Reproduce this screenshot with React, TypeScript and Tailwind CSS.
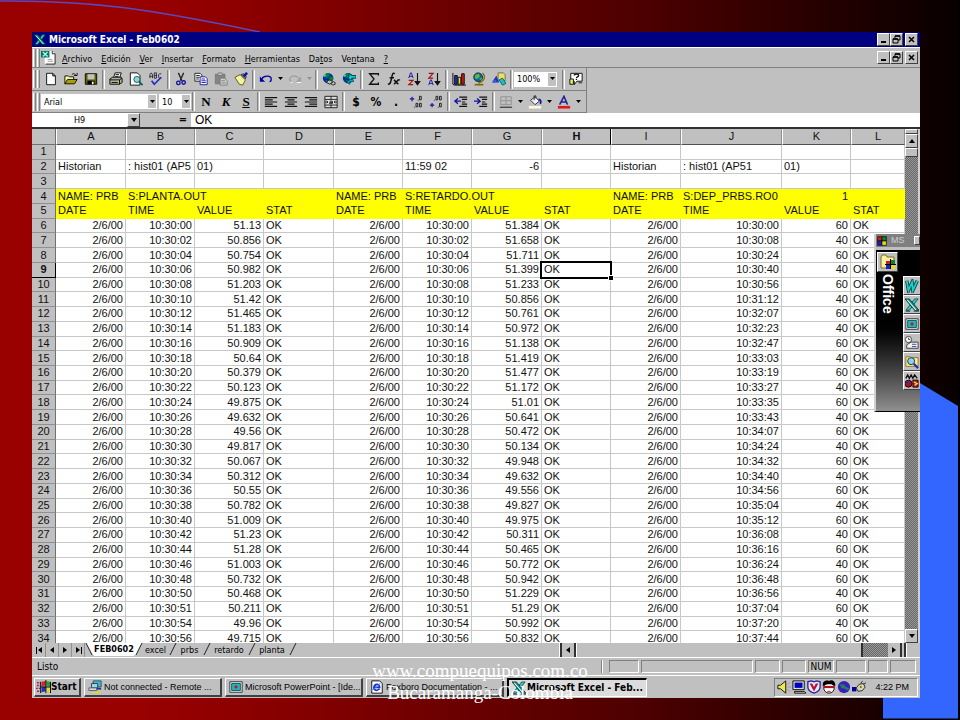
import type { ReactNode } from "react";
import clsx from "clsx";

/* ── Data ──────────────────────────────────────────────────────────────── */

const COLUMNS = [
  { id: "A", width: "w-[70px]" },
  { id: "B", width: "w-[69px]" },
  { id: "C", width: "w-[69px]" },
  { id: "D", width: "w-[70px]" },
  { id: "E", width: "w-[69px]" },
  { id: "F", width: "w-[69px]" },
  { id: "G", width: "w-[70px]" },
  { id: "H", width: "w-[69px]" },
  { id: "I", width: "w-[70px]" },
  { id: "J", width: "w-[101px]" },
  { id: "K", width: "w-[69px]" },
  { id: "L", width: "w-auto" },
];

// [seconds after 10:30, planta, retardo, time of dep_prbs]
const READINGS: [string, string, string, string][] = [
  ["00", "51.13", "51.384", "10:30:00"],
  ["02", "50.856", "51.658", "10:30:08"],
  ["04", "50.754", "51.711", "10:30:24"],
  ["06", "50.982", "51.399", "10:30:40"],
  ["08", "51.203", "51.233", "10:30:56"],
  ["10", "51.42", "50.856", "10:31:12"],
  ["12", "51.465", "50.761", "10:32:07"],
  ["14", "51.183", "50.972", "10:32:23"],
  ["16", "50.909", "51.138", "10:32:47"],
  ["18", "50.64", "51.419", "10:33:03"],
  ["20", "50.379", "51.477", "10:33:19"],
  ["22", "50.123", "51.172", "10:33:27"],
  ["24", "49.875", "51.01", "10:33:35"],
  ["26", "49.632", "50.641", "10:33:43"],
  ["28", "49.56", "50.472", "10:34:07"],
  ["30", "49.817", "50.134", "10:34:24"],
  ["32", "50.067", "49.948", "10:34:32"],
  ["34", "50.312", "49.632", "10:34:40"],
  ["36", "50.55", "49.556", "10:34:56"],
  ["38", "50.782", "49.827", "10:35:04"],
  ["40", "51.009", "49.975", "10:35:12"],
  ["42", "51.23", "50.311", "10:36:08"],
  ["44", "51.28", "50.465", "10:36:16"],
  ["46", "51.003", "50.772", "10:36:24"],
  ["48", "50.732", "50.942", "10:36:48"],
  ["50", "50.468", "51.229", "10:36:56"],
  ["51", "50.211", "51.29", "10:37:04"],
  ["54", "49.96", "50.992", "10:37:20"],
  ["56", "49.715", "50.832", "10:37:44"],
];

const ROWS: string[][] = [
  ["", "", "", "", "", "", "", "", "", "", "", ""],
  ["Historian", ": hist01 (AP5", "01)", "", "", "11:59 02", "-6", "", "Historian", ": hist01 (AP51", "01)", ""],
  ["", "", "", "", "", "", "", "", "", "", "", ""],
  ["NAME: PRB", "S:PLANTA.OUT", "", "", "NAME: PRB", "S:RETARDO.OUT", "", "", "NAME: PRB", "S:DEP_PRBS.RO0", "1", ""],
  ["DATE", "TIME", "VALUE", "STAT", "DATE", "TIME", "VALUE", "STAT", "DATE", "TIME", "VALUE", "STAT"],
  ...READINGS.map(([s, planta, retardo, time], i) => [
    "2/6/00", `10:30:${s}`, planta, "OK",
    "2/6/00", `10:30:${s}`, retardo, "OK",
    "2/6/00", time, i % 2 ? "40" : "60", "OK",
  ]),
];

const MENUS: [string, string, string][] = [
  ["", "A", "rchivo"],
  ["", "E", "dición"],
  ["", "V", "er"],
  ["", "I", "nsertar"],
  ["", "F", "ormato"],
  ["", "H", "erramientas"],
  ["Da", "t", "os"],
  ["Ve", "n", "tana"],
  ["", "?", ""],
];

const UI_FONT = "font-['DejaVu_Sans_Condensed','Liberation_Sans',sans-serif]";
const RAISED = "border border-t-white border-l-white border-r-[#404040] border-b-[#404040] bg-[#c0c0c0]";
const SUNKEN = "border border-t-[#808080] border-l-[#808080] border-r-white border-b-white";
const DITHER = "bg-[repeating-conic-gradient(#686868_0_25%,#989898_0_50%)] bg-[length:2px_2px]";

/* ── Icons (16-unit grid) ──────────────────────────────────────────────── */

function Icon({ size = 14, children }: { size?: number; children: ReactNode }) {
  return (
    <svg width={size} height={size} viewBox="0 0 16 16" fill="none" aria-hidden="true" className="shrink-0">
      {children}
    </svg>
  );
}

const globe = (
  <>
    <circle cx="7" cy="7" r="6" fill="#0030a0" />
    <path d="M3 3l4-2 2 2-2 3-3 1zM9 5l4 1-1 4-3 1-1-3zM4 9l3 1-1 2z" fill="#008830" />
    <path d="M2 5l2-2" stroke="#50d0e0" strokeWidth="2" />
  </>
);

const icons = {
  excel: (
    <>
      <path d="M11 1h4L5 14H1z" fill="#30c8c0" stroke="#034" strokeWidth=".8" />
      <path d="M0 1h5l11 13h-5z" fill="#128878" stroke="#022" strokeWidth=".8" />
      <path d="M2.500 2l10 11.500" stroke="#c8fff8" strokeWidth="1.300" />
      <path d="M1 15h5M10 15h6" stroke="#022" />
    </>
  ),
  excelDoc: (
    <>
      <path d="M4 1h8l3 3v11H4z" fill="#fff" />
      <path d="M15 4v11H5M12 1v3h3" stroke="#222" />
      <path d="M7 10h5M7 12h6" stroke="#999" />
      <path d="M0 1h9v7H0z" fill="#087860" />
      <path d="M2 2l5 5M7 2L2 7" stroke="#a0fff0" strokeWidth="1.500" />
    </>
  ),
  blank: <path d="M3 1.500h7l3 3v10H3zM10 1.500v3h3" fill="#fff" stroke="#000" />,
  open: (
    <>
      <path d="M1 13.500v-9h4l1 1h5v3" fill="#ffffa0" stroke="#000" />
      <path d="M1 13.500l3-5h11l-3 5z" fill="#a8a000" stroke="#000" />
      <path d="M9 3c2-2 4-1 4 1M11.500 4H15V1" stroke="#000" />
    </>
  ),
  save: (
    <>
      <path d="M1.500 2h13v12h-13z" fill="#606000" stroke="#000" />
      <path d="M4 2.500h8v6H4z" fill="#c0c0c0" />
      <path d="M4 10h8v4H4z" fill="#000" />
      <path d="M9 11h2v3H9z" fill="#fff" />
    </>
  ),
  print: (
    <>
      <path d="M5 7l2-6h7l-2 6" fill="#fff" stroke="#000" />
      <path d="M7.500 3h4M7 5h4" stroke="#000" />
      <path d="M1 8l3-2h10l1 2v4l-3 2H1z" fill="#b0b0a0" stroke="#000" />
      <path d="M1 9h11v5M3 12h7M12 9l3-2" stroke="#000" />
      <path d="M9 10.500h2" stroke="#dd0" />
    </>
  ),
  preview: (
    <>
      <path d="M1.500 1h8l3 3v11h-11z" fill="#fff" stroke="#000" />
      <circle cx="9" cy="8.500" r="3.500" fill="#8cd8d8" stroke="#205050" />
      <path d="M11.500 11l4 4" stroke="#006868" strokeWidth="2" />
    </>
  ),
  spelling: (
    <>
      <path d="M1 7V3l1.500-2L4 3v4M1 5h3M6 1v6h2.500V1zM6 4h2.500M14 2h-2l-1 1v3l1 1h2" stroke="#223" />
      <path d="M3 10l3 4 8-8" stroke="#2030c0" strokeWidth="2" />
    </>
  ),
  cut: (
    <>
      <path d="M5 1l4 9M11 1L7 10" stroke="#222" strokeWidth="1.500" />
      <circle cx="5" cy="12.500" r="2" stroke="#1010a0" strokeWidth="1.500" />
      <circle cx="11" cy="12" r="2" stroke="#1010a0" strokeWidth="1.500" />
    </>
  ),
  copy: (
    <>
      <path d="M1 1.500h6l2 2v7H1z" fill="#fff" stroke="#111" />
      <path d="M2.500 4h4M2.500 6h4M2.500 8h3" stroke="#111" />
      <path d="M7 5.500h6l2 2v7H7z" fill="#fff" stroke="#1010a0" />
      <path d="M8.500 8h4M8.500 10h5M8.500 12h5" stroke="#1010a0" />
    </>
  ),
  paste: (
    <>
      <path d="M1.500 2.500h11v11h-11z" fill="#858585" stroke="#777" />
      <path d="M4 4l1-3h4l1 3z" fill="#c0c0c0" stroke="#777" />
      <path d="M7 7h5l3 3v5H7z" fill="#d0d0d0" stroke="#777" />
      <path d="M8.500 10h4M8.500 12.500h5" stroke="#777" />
    </>
  ),
  painter: (
    <>
      <path d="M1 6l6-3 6 6-3 6-4-1z" fill="#f0f080" stroke="#555520" />
      <path d="M3 7l6 6M5 5l6 6" stroke="#fff" />
      <path d="M8 3l5 5 1-3-3-3z" fill="#909090" stroke="#333" />
      <path d="M11 5l4-4" stroke="#1010b0" strokeWidth="3" />
    </>
  ),
  undo: (
    <>
      <path d="M3 8c3-5 11-4 11 0 0 2-1 3-2 3" stroke="#0000a0" strokeWidth="1.500" />
      <path d="M1 5v6h6z" fill="#0000a0" />
    </>
  ),
  redo: (
    <>
      <path d="M13 8C10 3 2 4 2 8c0 2 1 3 2 3" stroke="#8a8a8a" />
      <path d="M15 5v6H9z" fill="#a0a0a0" />
      <path d="M3 12h2M10 12h5" stroke="#fff" />
    </>
  ),
  link: (
    <>
      {globe}
      <path d="M5 12l3-3 3 1 1 2-3 2zM10 13l3-2 2 1v2l-3 1z" fill="#c0c0c0" stroke="#222" />
    </>
  ),
  web: (
    <>
      {globe}
      <path d="M8 5V2l3 2h5v3h-5v3L7 7z" fill="#00d8d8" stroke="#003850" />
      <path d="M13 9v2H9v3L5 11l4-2" fill="#00b8b8" stroke="#003850" strokeWidth=".8" />
    </>
  ),
  sigma: <path d="M13 4V2H3l5 6-5 6h10v-2" stroke="#111" strokeWidth="1.500" />,
  fx: (
    <path d="M9 2C6 0 6 4 5 8s-1 6-4 6M3 6.500h5M8 9l5 5M13 9l-5 5M12 9h3" stroke="#111" strokeWidth="1.700" />
  ),
  sortAsc: (
    <>
      <path d="M2 7l2-6h1l2 6M2.500 5h4" stroke="#1010a0" />
      <path d="M2 9.500h5L2 14.500h5" stroke="#a01010" strokeWidth="1.300" />
      <path d="M12 1v12M9.500 11l2.500 3.500 2.500-3.500z" stroke="#111" strokeWidth="1.300" fill="#111" />
    </>
  ),
  sortDesc: (
    <>
      <path d="M2 1.500h5L2 7h5" stroke="#a01010" strokeWidth="1.300" />
      <path d="M2 15l2-6h1l2 6M2.500 13h4" stroke="#1010a0" />
      <path d="M12 1v12M9.500 11l2.500 3.500 2.500-3.500z" stroke="#111" strokeWidth="1.300" fill="#111" />
    </>
  ),
  chart: (
    <>
      <path d="M1 1v13l2 1h13" stroke="#000" />
      <path d="M3 4h3v10H3z" fill="#2030d0" stroke="#000" />
      <path d="M7 6h3v8H7z" fill="#f0e020" stroke="#000" />
      <path d="M11 2h3v12h-3z" fill="#d81818" stroke="#000" />
    </>
  ),
  map: (
    <>
      <path d="M12 1c4 4 2 10-4 11M8 12v2" stroke="#807000" strokeWidth="1.500" />
      <circle cx="7" cy="6" r="5" fill="#1060b0" stroke="#222" />
      <path d="M4 3l4-1 1 3-3 3-3-1zM8 8l3-2v3z" fill="#50c040" />
      <path d="M3 14.500h10" stroke="#807000" strokeWidth="2" />
    </>
  ),
  drawing: (
    <>
      <path d="M7 1h6l2 2v7H7z" fill="#f0e060" stroke="#665" />
      <path d="M0 12l5-8 3 8z" fill="#2030c0" />
      <path d="M1 9h4v3H1z" fill="#3060e0" />
      <path d="M8 9l4-2 4 6-4 2z" fill="#20c0c0" stroke="#066" />
    </>
  ),
  help: (
    <>
      <path d="M2 1.500h13v9H9l-3 4v-4H2z" fill="#fff" stroke="#000" />
      <path d="M1 8h4v6H1z" fill="#f0f060" stroke="#000" />
      <path d="M6 4c0-2 5-2 5 0s-2.500 1-2.500 3M8.500 8v1" stroke="#111" strokeWidth="1.500" />
      <path d="M11 12h4" stroke="#554" strokeWidth="2" />
    </>
  ),
  left: <path d="M1 3h14M1 5.500h9M1 8h14M1 10.500h9M1 13h14" stroke="#111" strokeWidth="1.300" />,
  center: <path d="M1 3h14M4 5.500h8M1 8h14M4 10.500h8M1 13h14" stroke="#111" strokeWidth="1.300" />,
  right: <path d="M1 3h14M6 5.500h9M1 8h14M6 10.500h9M1 13h14" stroke="#111" strokeWidth="1.300" />,
  merge: (
    <>
      <path d="M1 1.500h14v13H1zM1 5h14M1 11.500h14M8 1.500V5M8 11.500v3" fill="#e0e0e0" stroke="#111" />
      <path d="M1 8h3M12 8h3M3 6.500L4.500 8 3 9.500M13 6.500L11.500 8 13 9.500" stroke="#111" />
      <path d="M6.500 7h3v3h-3V8.500h3" stroke="#111" />
    </>
  ),
  incDecimal: (
    <>
      <path d="M1 4.500h5M3.500 2v5" stroke="#1010a0" strokeWidth="1.300" />
      <path d="M12 1.500h2v4h-2zM8 9.500h2v4H8zM12 9.500h2v4h-2z" stroke="#111" />
      <path d="M10 6h1M6 14h1" stroke="#111" />
    </>
  ),
  decDecimal: (
    <>
      <path d="M1 11.500h5M3.500 9v5" stroke="#1010a0" strokeWidth="1.300" />
      <path d="M8 1.500h2v4H8zM12 1.500h2v4h-2zM12 9.500h2v4h-2z" stroke="#111" />
      <path d="M6 6h1M10 14h1" stroke="#111" />
    </>
  ),
  outdent: (
    <>
      <path d="M6 2.500h9M9 5h6M9 8h4M9 10.500h6M6 13h9" stroke="#111" strokeWidth="1.300" />
      <path d="M8 7H2M4.500 4L1 7l3.500 3" stroke="#1010a0" strokeWidth="1.500" />
    </>
  ),
  indent: (
    <>
      <path d="M6 2.500h9M9 5h6M9 8h4M9 10.500h6M6 13h9" stroke="#111" strokeWidth="1.300" />
      <path d="M0 7h6M3.500 4L7 7l-3.500 3" stroke="#1010a0" strokeWidth="1.500" />
    </>
  ),
  borders: (
    <>
      <path d="M2 2h12v9H2zM8 2v9M2 6.500h12" stroke="#909090" />
      <path d="M1 14h14" stroke="#444" strokeWidth="1.500" />
    </>
  ),
  fill: (
    <>
      <path d="M3 6l5-4 5 5-5 4z" fill="#f4f4f4" stroke="#223" />
      <path d="M7 6V1h2v3" stroke="#223" />
      <path d="M12 5c3 0 3 3 2 5" stroke="#1010a0" strokeWidth="2" />
      <path d="M1 12.500h14v3H1z" fill="#fff8dc" />
    </>
  ),
  fontColor: (
    <>
      <path d="M3 11L8 1.500l4 9.500M5 8h6" stroke="#202090" strokeWidth="1.700" />
      <path d="M1 12.500h14v3H1z" fill="#e01818" />
    </>
  ),
  windows: (
    <>
      <path d="M6 3l4-1v5l-4 1z" fill="#e02020" />
      <path d="M11 2l4 1v5l-4-1z" fill="#20a030" />
      <path d="M6 9l4-1v5l-4 1z" fill="#2030d0" />
      <path d="M11 8l4 1v5l-4-1z" fill="#e8d820" />
      <path d="M1 4h4M1 7h4M0 10h5M1 13h4" stroke="#a02060" strokeWidth="1.500" strokeDasharray="2 1" />
      <path d="M10.500 1v14M5 8.500h11M5 3v12M15.500 3v12" stroke="#000" />
    </>
  ),
  remote: (
    <>
      <path d="M6 1h9v7H6z" fill="#30c0d0" stroke="#445" />
      <path d="M4 4h7v5H4z" fill="#90d8f0" stroke="#334" />
      <path d="M1 9h9v3H1z" fill="#d8d8d8" stroke="#556" />
      <path d="M10 9h5v2h-5z" fill="#2030a0" />
      <path d="M6 14h7l1-2" stroke="#e0d820" strokeWidth="2" />
    </>
  ),
  powerpoint: (
    <>
      <path d="M1 2h14v12H1z" fill="#f4f4f4" stroke="#223" />
      <path d="M3 4h10v8H3z" fill="#20b8b8" stroke="#055" />
      <circle cx="8" cy="8" r="2" fill="#b02040" />
    </>
  ),
  explorer: (
    <>
      <path d="M2 1h9l3 3v11H2z" fill="#fff" stroke="#000" />
      <path d="M4 8.500h7c0-5-6-4-6.500 0s4 4 6.500 1.500" stroke="#2030d0" strokeWidth="2" />
      <path d="M1 12c3-1 9-5 11-9" stroke="#30a0e0" />
    </>
  ),
  speaker: (
    <>
      <path d="M1 6h3l6-5v14l-6-5H1z" fill="#f0e850" stroke="#000" />
      <path d="M12 5l3-2M12 8h4M12 11l3 2" stroke="#999" />
    </>
  ),
  monitor: (
    <>
      <path d="M1 1h13v10H1z" fill="#d8d8d8" stroke="#000" />
      <path d="M3 3h9v6H3z" fill="#0000c0" />
      <path d="M3 13h11l2 2H3z" fill="#d8d8d8" stroke="#000" />
    </>
  ),
  shield: (
    <>
      <path d="M1 2l4-1 3 1 3-1 4 1v6c0 4-4 6-7 7-3-1-7-3-7-7z" fill="#e8e8ff" stroke="#2020a0" strokeWidth="1.500" />
      <path d="M3 4l5 9 5-9h-3L8 8 6 4z" fill="#c01030" />
    </>
  ),
  face: (
    <>
      <circle cx="8" cy="9" r="6" fill="#fff" stroke="#000" />
      <path d="M1 7C0 1 5 0 8 1c4-2 8 1 7 6-3-3-10-3-14 0z" fill="#000" />
      <path d="M2 8h12" stroke="#b01020" strokeWidth="2.500" />
      <path d="M6 13h4" stroke="#b01020" />
    </>
  ),
  earth: (
    <>
      <circle cx="8" cy="8" r="7" fill="#3820b8" />
      <path d="M3 5h5l2 3 4 1-2 3-3-2-4-1z" fill="#208060" />
    </>
  ),
  plug: (
    <>
      <path d="M0 8h5v5H0z" fill="#0000a0" />
      <path d="M5 9l3-4 5-1 2 4-3 4-5 1z" fill="#d8d8b0" stroke="#222" />
      <path d="M10 4l2-3M13 5l3-2" stroke="#222" />
      <path d="M9 8h2" stroke="#806000" strokeWidth="2" />
    </>
  ),
  office: (
    <>
      <path d="M1 1h7v7H1z" fill="#c82020" stroke="#000" />
      <path d="M8 1h7v7H8z" fill="#108030" stroke="#000" />
      <path d="M1 8h7v7H1z" fill="#2020c0" stroke="#000" />
      <path d="M8 8h7v7H8z" fill="#e8d820" stroke="#000" />
    </>
  ),
  officeFolder: (
    <>
      <path d="M1 3l1-2h4l1 2h7v11H1z" fill="#fff0a0" stroke="#777030" />
      <path d="M6 7h4v4H6z" fill="#c82020" />
      <path d="M11 6h4v4h-4z" fill="#108030" />
      <path d="M6 11h4v4H6z" fill="#2020c0" />
      <path d="M11 11h4v4h-4z" fill="#e8d820" />
      <path d="M10.500 5v10M5 10.500h11" stroke="#000" />
    </>
  ),
  word: (
    <>
      <path d="M2 2l2 11 4-9 1 9 5-11" stroke="#064848" strokeWidth="4" />
      <path d="M2 2l2 11 4-9 1 9 5-11" stroke="#20d0c8" strokeWidth="2" />
    </>
  ),
  schedule: (
    <>
      <circle cx="4" cy="4" r="3.500" fill="#fff" stroke="#333" />
      <path d="M4 2v2h2" stroke="#333" />
      <path d="M2 10l5-3h8v7H2z" fill="#f0f0f0" stroke="#333" />
      <path d="M8 9.500h5M8 12h5" stroke="#3040a0" />
    </>
  ),
  find: (
    <>
      <path d="M1 2h5l1 1h8v10H1z" fill="#ffec80" stroke="#887020" />
      <circle cx="7" cy="7" r="4" fill="#80d8f0" stroke="#225" />
      <path d="M10 10l5 5" stroke="#2030b0" strokeWidth="2.500" />
    </>
  ),
  msBinder: (
    <>
      <path d="M1 5l2-4 2 4 2-4 2 4 2-4 3 4" stroke="#111" strokeWidth="1.500" />
      <circle cx="4" cy="11" r="4" fill="#b01020" stroke="#000" />
      <path d="M9 7h6v8H9z" fill="#c01828" stroke="#000" />
      <path d="M2 9l3 2" stroke="#2030c0" strokeWidth="2" />
      <path d="M10 9l4 2-3 2" stroke="#f0d020" strokeWidth="1.500" />
    </>
  ),
};

type IconName = keyof typeof icons;

/* ── Small controls ────────────────────────────────────────────────────── */

function Arrow({ dir = "down", muted = false }: { dir?: "up" | "down" | "left" | "right"; muted?: boolean }) {
  const paths = {
    up: "M0 5l3-4 3 4z",
    down: "M0 1h6L3 5z",
    left: "M5 0v6L1 3z",
    right: "M1 0v6l4-3z",
  };
  return (
    <svg width="6" height="6" viewBox="0 0 6 6" aria-hidden="true">
      <path d={paths[dir]} fill={muted ? "#909090" : "#000"} />
    </svg>
  );
}

function SmallArrow({ muted = false }: { muted?: boolean }) {
  return (
    <svg width="5" height="4" viewBox="0 0 5 4" aria-hidden="true">
      <path d="M0 0h5L2.500 3z" fill={muted ? "#909090" : "#000"} />
    </svg>
  );
}

function Tool({ name, label }: { name: IconName; label: string }) {
  return (
    <button type="button" aria-label={label} className="flex h-5 w-5 items-center justify-center">
      <Icon>{icons[name]}</Icon>
    </button>
  );
}

function Drop({ label, muted }: { label: string; muted?: boolean }) {
  return (
    <button type="button" aria-label={label} className="flex h-5 w-[9px] items-center justify-center">
      <SmallArrow muted={muted} />
    </button>
  );
}

function Sep() {
  return <span className="mx-px h-[19px] w-[3px] shrink-0 border-r border-l border-r-white border-l-[#808080]" />;
}

function Handle() {
  return (
    <span className="mr-px flex h-[18px] shrink-0 gap-px pl-px">
      <span className="w-[3px] border-r border-l border-r-[#808080] border-l-white" />
      <span className="w-[3px] border-r border-l border-r-[#808080] border-l-white" />
    </span>
  );
}

function Combo({ label, value, width }: { label: string; value: string; width: string }) {
  return (
    <span className={clsx("grid h-[15px] bg-white", width)}>
      <select
        aria-label={label}
        defaultValue={value}
        className="col-start-1 row-start-1 w-full appearance-none bg-transparent pl-[3px] text-[9px] leading-[14px]"
      >
        <option>{value}</option>
      </select>
      <span className="pointer-events-none col-start-1 row-start-1 m-px flex w-2 items-center justify-center justify-self-end bg-[#c0c0c0]">
        <SmallArrow />
      </span>
    </span>
  );
}

function WindowControls() {
  const button = clsx(RAISED, "flex h-[13px] w-[13px] items-center justify-center");
  return (
    <div className="ml-auto flex pr-0.5">
      <button type="button" aria-label="Minimizar" className={button}>
        <svg width="9" height="9" viewBox="0 0 9 9"><path d="M2 7h5" stroke="#000" strokeWidth="2" /></svg>
      </button>
      <button type="button" aria-label="Restaurar" className={button}>
        <svg width="9" height="9" viewBox="0 0 9 9" fill="none">
          <path d="M3 3V1h5v4H6M1 4h5v4H1z" stroke="#000" />
          <path d="M3 1h5M1 4h5" stroke="#000" strokeWidth="1.500" />
        </svg>
      </button>
      <button type="button" aria-label="Cerrar" className={clsx(button, "ml-0.5")}>
        <svg width="9" height="9" viewBox="0 0 9 9"><path d="M2 2l5 5M7 2L2 7" stroke="#000" strokeWidth="1.500" /></svg>
      </button>
    </div>
  );
}

/* ── Toolbars ──────────────────────────────────────────────────────────── */

function StandardToolbar() {
  return (
    <div className="flex h-[23px] w-[555px] items-center border-r border-b border-[#808080]">
      <Handle />
      <Tool name="blank" label="Nuevo" />
      <Tool name="open" label="Abrir" />
      <Tool name="save" label="Guardar" />
      <Sep />
      <Tool name="print" label="Imprimir" />
      <Tool name="preview" label="Vista preliminar" />
      <Tool name="spelling" label="Ortografía" />
      <Sep />
      <Tool name="cut" label="Cortar" />
      <Tool name="copy" label="Copiar" />
      <Tool name="paste" label="Pegar" />
      <Tool name="painter" label="Copiar formato" />
      <Sep />
      <Tool name="undo" label="Deshacer" />
      <Drop label="Lista deshacer" />
      <Tool name="redo" label="Rehacer" />
      <Drop label="Lista rehacer" muted />
      <Sep />
      <Tool name="link" label="Hipervínculo" />
      <Tool name="web" label="Barra Web" />
      <Sep />
      <Tool name="sigma" label="Autosuma" />
      <Tool name="fx" label="Pegar función" />
      <Tool name="sortAsc" label="Orden ascendente" />
      <Tool name="sortDesc" label="Orden descendente" />
      <Sep />
      <Tool name="chart" label="Asistente para gráficos" />
      <Tool name="map" label="Mapa" />
      <Tool name="drawing" label="Dibujo" />
      <Sep />
      <Combo label="Zoom" value="100%" width="w-[43px]" />
      <span className="w-1" />
      <Sep />
      <Tool name="help" label="Ayudante de Office" />
    </div>
  );
}

function FormatToolbar() {
  return (
    <div className="flex h-[22px] w-[555px] items-center border-r border-b border-[#808080]">
      <Handle />
      <Combo label="Fuente" value="Arial" width="w-[116px]" />
      <span className="w-0.5" />
      <Combo label="Tamaño de fuente" value="10" width="w-8" />
      <Sep />
      <button type="button" className="h-5 w-5 font-['Liberation_Serif',serif] text-[13px] font-black">N</button>
      <button type="button" className="h-5 w-5 font-['Liberation_Serif',serif] text-[13px] font-bold italic">K</button>
      <button type="button" className="h-5 w-5 font-['Liberation_Serif',serif] text-[13px] font-bold underline">S</button>
      <Sep />
      <Tool name="left" label="Alinear a la izquierda" />
      <Tool name="center" label="Centrar" />
      <Tool name="right" label="Alinear a la derecha" />
      <Tool name="merge" label="Combinar y centrar" />
      <Sep />
      <button type="button" className="h-5 w-5 text-[12px] font-bold">$</button>
      <button type="button" className="h-5 w-5 text-[12px] font-bold">%</button>
      <button type="button" className="h-5 w-5 text-[12px] font-bold">.</button>
      <Tool name="incDecimal" label="Aumentar decimales" />
      <Tool name="decDecimal" label="Disminuir decimales" />
      <Sep />
      <Tool name="outdent" label="Disminuir sangría" />
      <Tool name="indent" label="Aumentar sangría" />
      <Sep />
      <Tool name="borders" label="Bordes" />
      <Drop label="Lista bordes" />
      <Tool name="fill" label="Color de relleno" />
      <Drop label="Lista relleno" />
      <Tool name="fontColor" label="Color de fuente" />
      <Drop label="Lista color de fuente" />
    </div>
  );
}

function FormulaBar() {
  return (
    <div className="flex h-4 shrink-0 items-stretch border-b-2 border-[#303030] bg-white">
      <input
        aria-label="Cuadro de nombres"
        defaultValue="H9"
        className="w-[95px] text-center text-[9px] leading-[14px]"
      />
      <button type="button" aria-label="Lista de nombres" className={clsx(RAISED, "flex w-[13px] items-center justify-center")}>
        <Arrow />
      </button>
      <span className="flex w-[51px] items-center justify-end bg-[#c0c0c0] pr-1 text-[11px] leading-[14px] font-bold">=</span>
      <input
        aria-label="Barra de fórmulas"
        defaultValue="OK"
        className="min-w-0 flex-1 pl-1 font-['Liberation_Sans',sans-serif] text-[12px] leading-[14px]"
      />
    </div>
  );
}

/* ── Sheet ─────────────────────────────────────────────────────────────── */

function isRightAligned(text: string) {
  return /^(-?[\d.]+|2\/6\/00|\d\d:\d\d:\d\d)$/.test(text);
}

function Sheet() {
  return (
    <table className="h-[517px] w-full table-fixed border-separate border-spacing-0 font-['Liberation_Sans',sans-serif] text-[11px] leading-[13px] text-[#111]">
      <colgroup>
        <col className="w-6" />
        {COLUMNS.map((c) => <col key={c.id} className={c.width} />)}
      </colgroup>
      <thead>
        <tr className="h-4 bg-[#c0c0c0]">
          <td className="border-r border-b border-[#707070]" />
          {COLUMNS.map((c) => (
            <th
              key={c.id}
              scope="col"
              className={clsx(
                "border-b border-l border-b-[#505050] border-l-white p-0 text-center",
                c.id === "H" ? "border-r border-r-black font-bold" : "border-r border-r-[#909090] font-normal",
              )}
            >
              {c.id}
            </th>
          ))}
        </tr>
      </thead>
      <tbody>
        {ROWS.map((row, r) => {
          const heading = r === 3 || r === 4;
          return (
            <tr key={r} className={heading ? "bg-[#ffff00]" : "bg-white"}>
              <th
                scope="row"
                className={clsx(
                  "border-r border-b bg-[#c0c0c0] p-0 text-center",
                  r === 8 ? "border-black font-bold" : "border-r-[#707070] border-b-[#909090] font-normal",
                )}
              >
                {r + 1}
              </th>
              {row.map((text, c) => {
                const selected = r === 8 && c === 7;
                return (
                  <td
                    key={c}
                    className={clsx(
                      "border-r border-b px-0.5 py-0 whitespace-nowrap",
                      heading ? "border-[#ffff00]" : "border-[#c8c8c8]",
                      isRightAligned(text) && "text-right",
                      selected && "relative",
                    )}
                  >
                    {text}
                    {selected && (
                      <span className="absolute -inset-0.5 border-2 border-black">
                        <span className="absolute -right-[3px] -bottom-[3px] h-1 w-1 bg-black outline outline-white" />
                      </span>
                    )}
                  </td>
                );
              })}
            </tr>
          );
        })}
      </tbody>
    </table>
  );
}

function VerticalScroll() {
  return (
    <div className={clsx("flex w-[15px] shrink-0 flex-col border-r-2 border-[#d0d0d0]", DITHER)}>
      <span className={clsx(RAISED, "h-[5px]")} />
      <button type="button" aria-label="Subir" className={clsx(RAISED, "flex h-[14px] items-center justify-center")}>
        <Arrow dir="up" />
      </button>
      <span className={clsx(RAISED, "h-[9px]")} />
      <button type="button" aria-label="Bajar" className={clsx(RAISED, "mt-auto flex h-[14px] items-center justify-center")}>
        <Arrow dir="down" />
      </button>
    </div>
  );
}

function TabEdge({ side }: { side?: "first" | "active" }) {
  return (
    <svg width="9" height="13" viewBox="0 0 9 13" aria-hidden="true" className="shrink-0">
      {side === "first" && <path d="M1 0l7 12h1V0z" fill="#fff" />}
      {side === "active" && <path d="M0 0h8L2 12H0z" fill="#fff" />}
      <path d={side === "first" ? "M1 0l6 12" : "M8 0L2 12"} stroke="#222" fill="none" />
    </svg>
  );
}

function SheetTabs() {
  const nav = "flex w-[13px] items-center justify-center border-r border-[#909090]";
  return (
    <div className="flex h-[15px] shrink-0 items-stretch border-b border-white bg-[#c0c0c0] pl-px text-[9px] leading-[13px]">
      <button type="button" aria-label="Primera hoja" className={nav}>
        <span className="h-[7px] w-px bg-black" /><Arrow dir="left" />
      </button>
      <button type="button" aria-label="Hoja anterior" className={nav}><Arrow dir="left" /></button>
      <button type="button" aria-label="Hoja siguiente" className={nav}><Arrow dir="right" /></button>
      <button type="button" aria-label="Última hoja" className={nav}>
        <Arrow dir="right" /><span className="h-[7px] w-px bg-black" />
      </button>
      <TabEdge side="first" />
      <button type="button" className="h-[13px] w-10 bg-white font-bold"><span className="flex justify-center">FEB0602</span></button>
      <TabEdge side="active" />
      <button type="button" className="w-[25px]">excel</button>
      <TabEdge />
      <button type="button" className="w-[25px]">prbs</button>
      <TabEdge />
      <button type="button" className="w-9">retardo</button>
      <TabEdge />
      <button type="button" className="w-8">planta</button>
      <TabEdge />
      <div className="ml-[262px] flex flex-1 items-stretch">
        <span className="w-[3px] border-r-2 border-l border-r-[#303030] border-l-white" />
        <button type="button" aria-label="Izquierda" className="flex w-[14px] items-center justify-center border-r-2 border-[#303030]">
          <Arrow dir="left" />
        </button>
        <span className="flex-1 border-r-2 border-l border-r-[#303030] border-l-white" />
        <span className={clsx("w-[25px]", DITHER)} />
        <button type="button" aria-label="Derecha" className="flex w-[14px] items-center justify-center border-r-2 border-[#303030]">
          <Arrow dir="right" />
        </button>
        <span className="w-1 border-r-2 border-[#303030]" />
        <span className="w-[14px] border-l border-white" />
      </div>
    </div>
  );
}

function StatusBar() {
  return (
    <div className="flex h-[18px] shrink-0 items-stretch gap-0.5 border-b border-white py-0.5 pr-1 pl-[5px] text-[10px] leading-[13px]">
      <span className="flex-1">Listo</span>
      <span className="mr-1 border-r border-l border-r-white border-l-[#808080]" />
      <span className={clsx(SUNKEN, "w-[30px]")} />
      <span className={clsx(SUNKEN, "w-[112px]")} />
      <span className={clsx(SUNKEN, "w-[25px]")} />
      <span className={clsx(SUNKEN, "w-6")} />
      <span className={clsx(SUNKEN, "w-[26px] text-center leading-[12px]")}>NUM</span>
      <span className={clsx(SUNKEN, "w-[30px]")} />
      <span className={clsx(SUNKEN, "w-5")} />
      <span className={clsx(SUNKEN, "w-[26px]")} />
    </div>
  );
}

/* ── Taskbar ───────────────────────────────────────────────────────────── */

const TASKS: { icon: IconName; title: string; active?: boolean }[] = [
  { icon: "remote", title: "Not connected - Remote ..." },
  { icon: "powerpoint", title: "Microsoft PowerPoint - [Ide..." },
  { icon: "explorer", title: "Foxboro Documentation - ..." },
  { icon: "excel", title: "Microsoft Excel - Feb...", active: true },
];

const TRAY: IconName[] = ["speaker", "monitor", "shield", "face", "earth", "plug"];

function Taskbar() {
  return (
    <div className="flex h-[22px] shrink-0 items-center gap-[3px] bg-[#c0c0c0] px-0.5 text-[9px] leading-[14px]">
      <button type="button" className={clsx(RAISED, "flex h-[19px] w-[47px] items-center border-r-2 border-b-2 pl-px text-[10px] font-bold")}>
        <Icon size={15}>{icons.windows}</Icon>
        Start
      </button>
      {TASKS.map((t) => (
        <button
          key={t.title}
          type="button"
          className={clsx(
            "flex h-[19px] items-center overflow-hidden pl-[3px] whitespace-nowrap",
            t.active
              ? "w-[140px] gap-px border border-t-2 border-l-2 border-t-black border-r-white border-b-white border-l-black bg-[#dcdcdc] text-[10px] font-bold"
              : clsx(RAISED, "w-[138px] gap-0.5 border-r-2 border-b-2 font-['Liberation_Sans',sans-serif]"),
          )}
        >
          <Icon>{icons[t.icon]}</Icon>
          {t.title}
        </button>
      ))}
      <div className={clsx(SUNKEN, "ml-auto flex h-[19px] w-[144px] items-center pl-px")}>
        {TRAY.map((name) => (
          <span key={name} className="flex w-[15px] justify-center">
            <Icon>{icons[name]}</Icon>
          </span>
        ))}
        <span className="ml-auto pr-2 font-['Liberation_Sans',sans-serif] text-[9px]">4:22 PM</span>
      </div>
    </div>
  );
}

/* ── Office shortcut bar, floats over the right edge of the sheet ──────── */

function OfficeBar() {
  const shortcuts: [IconName, string][] = [
    ["word", "Word"],
    ["excel", "Excel"],
    ["powerpoint", "PowerPoint"],
    ["schedule", "Agenda"],
    ["find", "Buscar"],
    ["msBinder", "Carpeta"],
  ];
  return (
    <aside className="absolute top-[202px] right-0 flex h-[178px] w-[46px] flex-col overflow-hidden border-b border-l-2 border-b-black border-l-[#d0d0d0] bg-[#c0c0c0]">
      <div className="flex h-[13px] shrink-0 items-center bg-[#808080] pl-px font-['Liberation_Sans',sans-serif] text-[9px] text-[#d0d0d0]">
        <Icon size={10}>{icons.office}</Icon>
        <span className="ml-1">MS</span>
        <button type="button" aria-label="Minimizar barra" className={clsx(RAISED, "ml-auto h-[9px] w-[6px]")} />
      </div>
      <div className="mt-[3px] flex flex-1 justify-between bg-linear-to-b from-black from-40% to-[#909090]">
        <div className="flex flex-col items-center gap-0.5 pt-0.5 pl-px">
          <button type="button" aria-label="Office" className={clsx(RAISED, "flex h-5 w-[21px] items-center justify-center")}>
            <Icon size={16}>{icons.officeFolder}</Icon>
          </button>
          <span className="font-['Liberation_Sans',sans-serif] text-[14px] leading-[14px] font-bold text-white [writing-mode:vertical-rl]">
            Office
          </span>
        </div>
        <div className="flex flex-col pt-[26px]">
          {shortcuts.map(([name, label]) => (
            <button
              key={label}
              type="button"
              aria-label={label}
              className={clsx(RAISED, "flex h-[19px] w-[17px] items-center justify-center border-r-0")}
            >
              <Icon>{icons[name]}</Icon>
            </button>
          ))}
        </div>
      </div>
    </aside>
  );
}

/* ── Slide ─────────────────────────────────────────────────────────────── */

function Backdrop() {
  return (
    <svg
      viewBox="0 0 960 720"
      preserveAspectRatio="none"
      aria-hidden="true"
      className="absolute inset-0 h-full w-full"
    >
      <path d="M0 1C90 0 150 9 260 32" fill="none" stroke="#5a48c0" strokeWidth="1.500" />
      <path d="M880 360L920 383L958 406V719H883V660z" fill="#3366ff" />
      <path d="M959 0v720M883 719.500h77" stroke="#000" strokeWidth="2" />
    </svg>
  );
}

export default function App() {
  return (
    <div className="relative h-screen overflow-hidden bg-[linear-gradient(to_right,#990000_0%,#990000_15%,#820000_33%,#4d0000_67%,#1c0000_90%,#080000_100%)] pt-8 pr-10 pb-[22px] pl-8">
      <Backdrop />
      <main className={clsx("relative flex h-full flex-col bg-[#c0c0c0] text-black", UI_FONT)}>
        <header className="flex h-4 shrink-0 items-center border-b border-white bg-[#000080] pl-0.5 text-white">
          <Icon size={12}>{icons.excel}</Icon>
          <h1 className="ml-[3px] text-[10px] leading-[14px] font-bold">Microsoft Excel - Feb0602</h1>
          <WindowControls />
        </header>

        <nav aria-label="Menú" className="flex h-5 shrink-0 items-center border-b border-[#808080] text-[9px] leading-[14px]">
          <Handle />
          <Icon size={15}>{icons.excelDoc}</Icon>
          <div className="ml-1.5 flex gap-[9px] pt-0.5">
            {MENUS.map(([before, key, after]) => (
              <button key={before + key} type="button" className="whitespace-pre">
                {before}<u>{key}</u>{after}
              </button>
            ))}
          </div>
          <WindowControls />
        </nav>

        <StandardToolbar />
        <FormatToolbar />
        <FormulaBar />

        <div className="flex min-h-0 flex-1">
          <div className="min-w-0 flex-1 overflow-hidden bg-white">
            <Sheet />
          </div>
          <VerticalScroll />
        </div>

        <SheetTabs />
        <StatusBar />
        <Taskbar />
        <OfficeBar />
      </main>

      <footer className="pointer-events-none absolute inset-x-0 bottom-4 text-center font-['Liberation_Serif',serif] text-[19px] leading-[22px] text-white">
        www.compuequipos.com.co
        <br />
        Bucaramanga-Colombia
      </footer>
    </div>
  );
}
